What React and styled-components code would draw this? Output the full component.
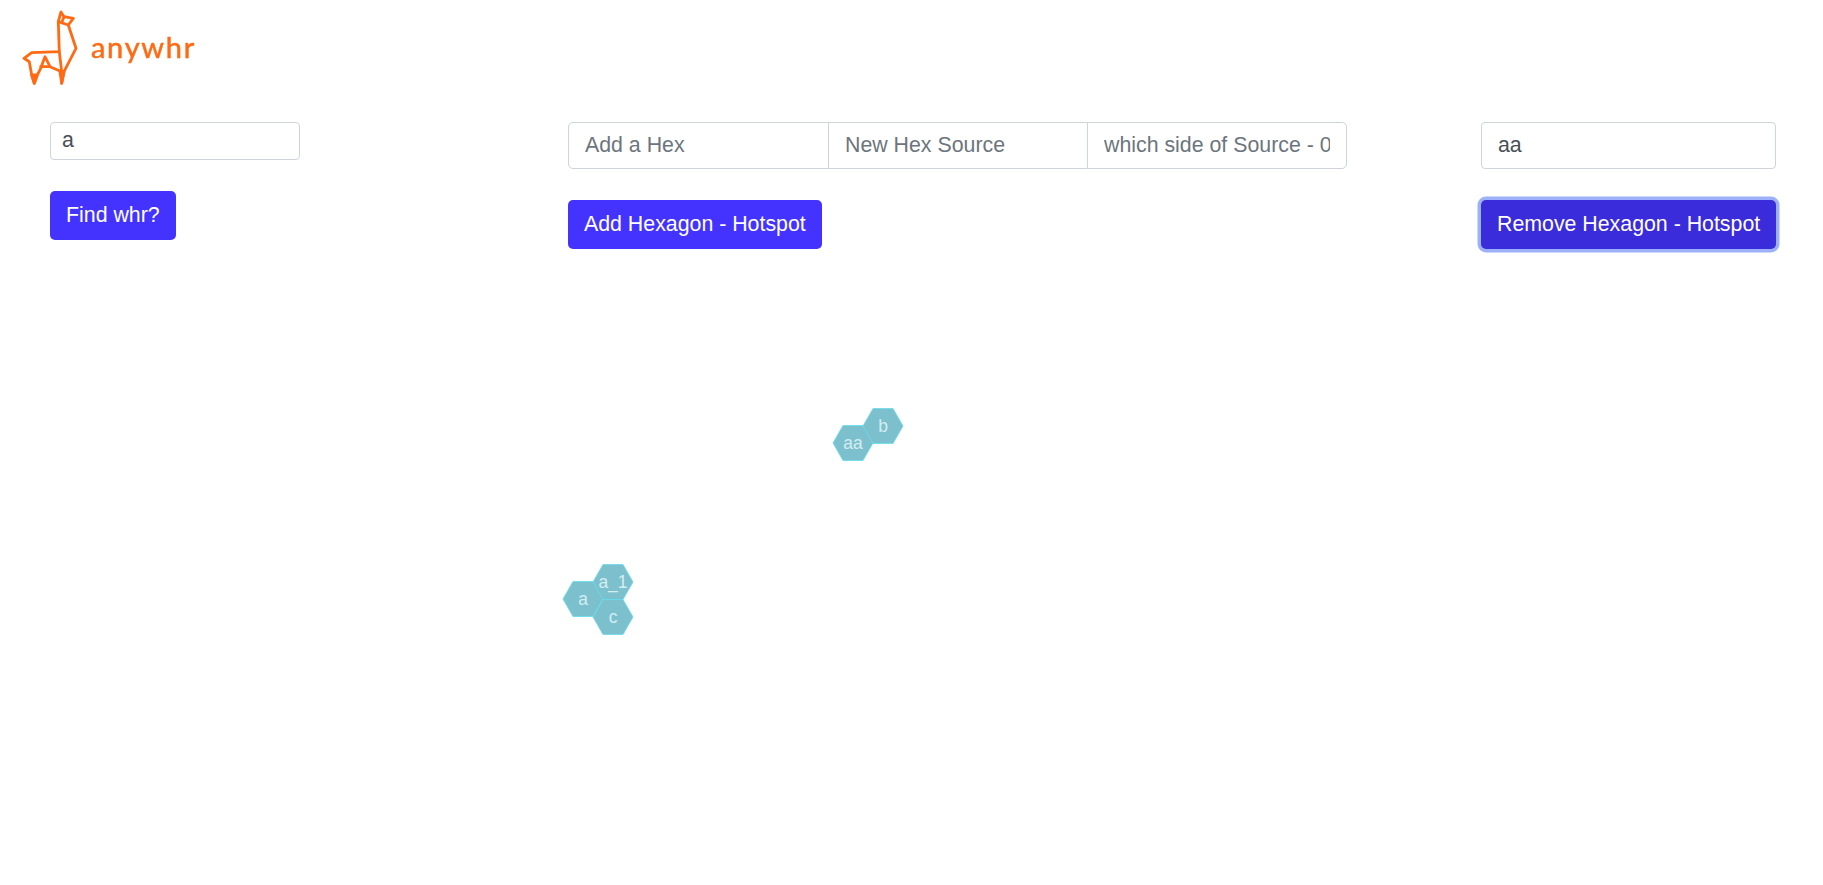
import React from "react";
import styled, { createGlobalStyle } from "styled-components";

const GlobalStyle = createGlobalStyle`
  html, body {
    margin: 0;
    padding: 0;
    background: #ffffff;
  }
  body {
    font-family: "Liberation Sans", Arial, sans-serif;
  }
  * {
    box-sizing: border-box;
  }
`;

const Page = styled.div`
  width: 100%;
  height: 885px;
  overflow: hidden;
`;

const Header = styled.header`
  height: 122px;
  padding: 10px 0 0 22px;
  display: flex;
  align-items: flex-start;
`;

const LogoLink = styled.a`
  display: flex;
  align-items: flex-start;
  color: #ff6a13;
  filter: blur(0.5px);
`;

const LogoWord = styled.span`
  font-family: Lato, sans-serif;
  font-size: 29px;
  font-weight: 400;
  letter-spacing: 1.7px;
  line-height: 34px;
  margin: 20px 0 0 5px;
  -webkit-text-stroke: 0.5px #ff6a13;
`;

const Controls = styled.section`
  display: grid;
  grid-template-columns: 518px 913px 295px;
  padding-left: 50px;
  height: 127px;
`;

const Column = styled.div`
  display: flex;
  flex-direction: column;
  align-items: flex-start;
  gap: ${(p) => p.$gap}px;
`;

const TextInput = styled.input`
  display: block;
  width: ${(p) => p.$width}px;
  height: ${(p) => p.$height}px;
  padding: 0 ${(p) => p.$pad}px ${(p) => (p.$height < 40 ? 2 : 0)}px;
  font-family: inherit;
  font-size: 21.33px;
  color: #495057;
  background: #ffffff;
  border: 1px solid #ced4da;
  border-radius: 4px;
  outline: none;
`;

const InputGroup = styled.div`
  display: flex;
  width: 779px;
  height: 47px;
`;

const GroupInput = styled.input`
  flex: 1 1 0;
  min-width: 0;
  height: 100%;
  margin-left: -1px;
  padding: 0 16px 1px;
  font-family: inherit;
  font-size: 21.33px;
  color: #495057;
  background: #ffffff;
  border: 1px solid #ced4da;
  border-radius: 0;
  outline: none;

  &:first-child {
    flex: 0 0 261px;
    margin-left: 0;
    border-radius: 5px 0 0 5px;
  }
  &:last-child {
    border-radius: 0 5px 5px 0;
  }
  &::placeholder {
    color: #6c757d;
    opacity: 1;
  }
`;

const Button = styled.button`
  height: 49px;
  padding: 0 16px 0;
  font-family: inherit;
  font-size: 21.33px;
  line-height: 1;
  color: #ffffff;
  white-space: nowrap;
  background: ${(p) => (p.$focused ? "#3a2bdb" : "#4433ff")};
  border: none;
  border-radius: 5px;
  box-shadow: ${(p) => (p.$focused ? "0 0 0 3.5px #9db1fa" : "none")};
  outline: none;
  cursor: pointer;
`;

const Canvas = styled.main`
  position: relative;
  height: 636px;
`;

const HexNode = styled.svg`
  position: absolute;
  left: ${(p) => p.$cx - 21}px;
  top: ${(p) => p.$cy - 249 - 19}px;
  width: 42px;
  height: 38px;
  overflow: visible;
`;

const HexShape = styled.polygon`
  fill: #7dc0cd;
  stroke: #62dcee;
  stroke-width: 0.8;
`;

const HexLabel = styled.text`
  fill: #d3edf1;
  font-family: "Liberation Sans", Arial, sans-serif;
  font-size: 17.5px;
  text-anchor: middle;
`;

const hexes = [
  { id: "aa", cx: 853, cy: 443 },
  { id: "b", cx: 883, cy: 426 },
  { id: "a", cx: 583, cy: 599 },
  { id: "a_1", cx: 613, cy: 582 },
  { id: "c", cx: 613, cy: 617 },
];

const Hexagon = ({ id, cx, cy }) => (
  <HexNode $cx={cx} $cy={cy} viewBox="0 0 42 38">
    <HexShape points="1,19 11,1.5 31,1.5 41,19 31,36.5 11,36.5" />
    <HexLabel x="21" y="24.8">
      {id}
    </HexLabel>
  </HexNode>
);

const LlamaIcon = () => (
  <svg width="64" height="78" viewBox="0 0 64 78" fill="none" stroke="#ff6a13" strokeWidth="2.8" strokeLinejoin="round" strokeLinecap="round">
    <path d="M39 2 L36.3 11.7 L37.3 41.7 L9.7 42.7 L2 48.3 L7.3 51.7 L9.7 65 L12.3 73.3 L15.3 65 L18.7 58.3 L23 46.7 L28 56.7 L39.7 61.7 L39.7 73.3 L42 61.7 L54 38.3 L46.3 15 L51.3 8.3 L42 6.7 Z" />
    <path d="M36.3 11.7 L46.3 15 M42 6.7 L40 12 M18.7 56.7 L28 56.7 M37.3 41.7 L39.7 61.7" />
    <path d="M9.7 65 L12.3 73.3 L15.3 65 Z M38 62 L39.7 73.3 L42 62 Z" fill="#ff6a13" />
  </svg>
);

export default function App() {
  return (
    <Page>
      <GlobalStyle />
      <Header>
        <LogoLink>
          <LlamaIcon />
          <LogoWord>anywhr</LogoWord>
        </LogoLink>
      </Header>
      <Controls>
        <Column $gap={31}>
          <TextInput $width={250} $height={38} $pad={11} defaultValue="a" />
          <Button>Find whr?</Button>
        </Column>
        <Column $gap={31}>
          <InputGroup>
            <GroupInput placeholder="Add a Hex" />
            <GroupInput placeholder="New Hex Source" />
            <GroupInput placeholder="which side of Source - 0-5" />
          </InputGroup>
          <Button>Add Hexagon - Hotspot</Button>
        </Column>
        <Column $gap={31}>
          <TextInput $width={295} $height={47} $pad={16} defaultValue="aa" />
          <Button $focused>Remove Hexagon - Hotspot</Button>
        </Column>
      </Controls>
      <Canvas>
        {hexes.map((hex) => (
          <Hexagon key={hex.id} {...hex} />
        ))}
      </Canvas>
    </Page>
  );
}
